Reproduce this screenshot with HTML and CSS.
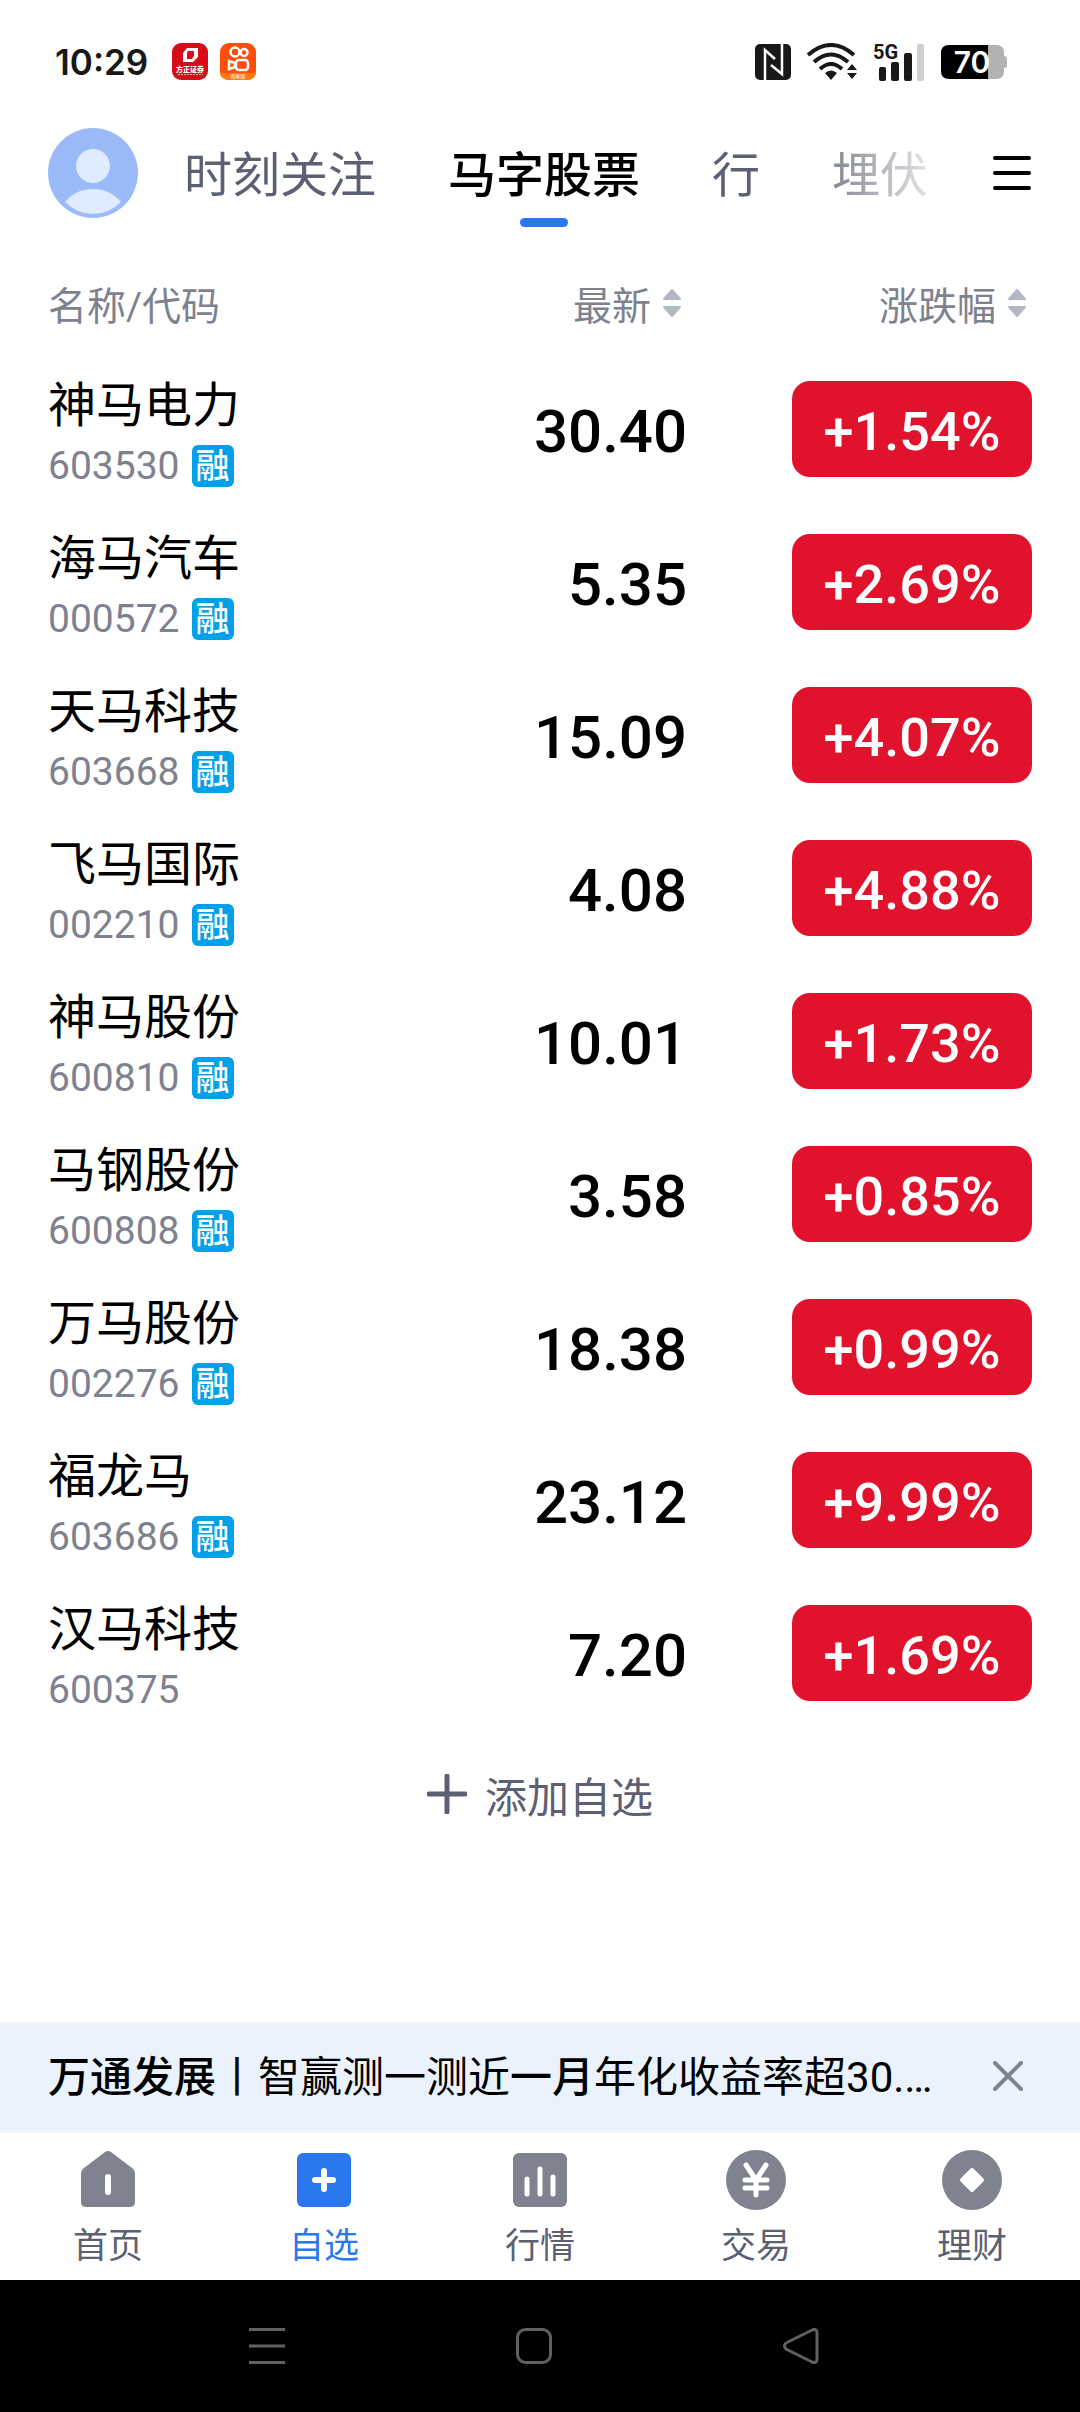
FILE: index.html
```html
<!DOCTYPE html>
<html lang="zh-CN">
<head>
    <meta charset="UTF-8">
    <meta name="viewport" content="width=device-width, initial-scale=1.0">
    <title>自选 - 马字股票</title>
    <link rel="stylesheet" href="styles.css">
</head>
<body>
    <div class="status-bar">
        <time class="clock">10:29</time>
        <div class="status-apps">
            <svg width="36" height="37" viewBox="0 0 36 37" role="img" aria-label="方正证券">
                <rect width="36" height="37" rx="9" fill="#d70b19"/>
                <path d="M15 5h11v9l-5 5H11v-9z" fill="#fff"/>
                <path d="M16 8h6v5l-2 3h-5v-6z" fill="#d70b19"/>
                <text x="18" y="29" text-anchor="middle" class="app-label">方正证券</text>
                <path d="M6 31.500h25" stroke="#fff" stroke-width="1" stroke-dasharray="2 1" opacity=".6"/>
            </svg>
            <svg width="36" height="37" viewBox="0 0 36 37" role="img" aria-label="快手">
                <rect width="36" height="37" rx="9" fill="#ff4d0a"/>
                <path d="M0 30h36a9 7 0 0 1-9 7H9a9 7 0 0 1-9-7z" fill="#fd7a10"/>
                <g fill="none" stroke="#fff" stroke-width="2.500">
                    <circle cx="15" cy="9" r="4.500"/>
                    <circle cx="24" cy="9.500" r="3.500"/>
                    <rect x="16" y="17" width="12" height="10" rx="3"/>
                    <path d="M15 20l-6-2v8l6-2z"/>
                </g>
                <text x="18" y="35" text-anchor="middle" class="app-tag">商家版</text>
            </svg>
        </div>
        <div class="status-icons">
            <svg width="36" height="36" viewBox="0 0 36 36" aria-hidden="true">
                <rect width="36" height="36" rx="5" fill="#181818"/>
                <path d="M10 36V6l10 9M27 0v30l-11-9" fill="none" stroke="#fff" stroke-width="2.500"/>
            </svg>
            <svg width="50" height="37" viewBox="0 0 50 37" aria-hidden="true">
                <g fill="none" stroke="#181818" stroke-width="4">
                    <path d="M1 12Q24-8 47 12"/>
                    <path d="M7 19Q24 4 41 19"/>
                    <path d="M13 26Q24 16 35 26"/>
                </g>
                <path d="M18 30q6-5 12 0l-6 7z" fill="#181818"/>
                <path d="M40 27l5-6 5 6zM40 30h10l-5 6z" fill="#181818"/>
            </svg>
            <svg width="52" height="38" viewBox="0 0 52 38" aria-hidden="true" class="signal">
                <text x="0" y="16" class="signal-label">5G</text>
                <g fill="#181818">
                    <rect x="6" y="24" width="7" height="14" rx="2"/>
                    <rect x="18" y="19" width="8" height="19" rx="2"/>
                    <rect x="31" y="10" width="8" height="28" rx="2"/>
                </g>
                <rect x="44" y="1" width="7" height="37" rx="2" fill="#cfcfcf"/>
            </svg>
            <svg width="66" height="34" viewBox="0 0 66 34" role="img" aria-label="电量 70%">
                <path d="M47 0h8q8 0 8 8v3q3 0 3 3v6q0 3-3 3v3q0 8-8 8h-8z" fill="#b2b2b2"/>
                <path d="M8 0h39v34H8q-8 0-8-8V8q0-8 8-8z" fill="#000"/>
                <text x="31" y="28" text-anchor="middle" class="battery-label">70</text>
            </svg>
        </div>
    </div>

    <header class="top-bar">
        <button class="avatar" aria-label="我的账户">
            <svg width="90" height="90" viewBox="0 0 90 90" aria-hidden="true">
                <circle cx="45" cy="45" r="45" fill="#9abaf9"/>
                <circle cx="45" cy="38" r="17" fill="#dfebfe"/>
                <path d="M17 74Q28 61 45 61T73 74Q61 86 45 86T17 74z" fill="#dfebfe"/>
            </svg>
        </button>
        <div class="tabs">
            <button class="tab">时刻关注</button>
            <button class="tab active">马字股票</button>
            <button class="tab">行</button>
            <button class="tab">埋伏</button>
        </div>
        <button class="menu" aria-label="分组管理">
            <svg width="40" height="34" viewBox="0 0 40 34" aria-hidden="true">
                <path d="M3 2h34M3 17h34M3 32h34" stroke="#000" stroke-width="4" stroke-linecap="round"/>
            </svg>
        </button>
    </header>

    <main>
        <table class="stocks">
            <thead>
                <tr>
                    <th scope="col">名称/代码</th>
                    <th scope="col" class="price">
                        <button class="sort">最新
                            <svg width="18" height="28" viewBox="0 0 18 28" aria-hidden="true"><path d="M9 1l8 9H1zM1 18h16l-8 9z"/></svg>
                        </button>
                    </th>
                    <th scope="col" class="change">
                        <button class="sort">涨跌幅
                            <svg width="18" height="28" viewBox="0 0 18 28" aria-hidden="true"><path d="M9 1l8 9H1zM1 18h16l-8 9z"/></svg>
                        </button>
                    </th>
                </tr>
            </thead>
            <tbody>
                <tr>
                    <td><div class="name">神马电力</div><div class="code">603530 <span class="tag">融</span></div></td>
                    <td class="price">30.40</td>
                    <td class="change"><span class="badge">+1.54%</span></td>
                </tr>
                <tr>
                    <td><div class="name">海马汽车</div><div class="code">000572 <span class="tag">融</span></div></td>
                    <td class="price">5.35</td>
                    <td class="change"><span class="badge">+2.69%</span></td>
                </tr>
                <tr>
                    <td><div class="name">天马科技</div><div class="code">603668 <span class="tag">融</span></div></td>
                    <td class="price">15.09</td>
                    <td class="change"><span class="badge">+4.07%</span></td>
                </tr>
                <tr>
                    <td><div class="name">飞马国际</div><div class="code">002210 <span class="tag">融</span></div></td>
                    <td class="price">4.08</td>
                    <td class="change"><span class="badge">+4.88%</span></td>
                </tr>
                <tr>
                    <td><div class="name">神马股份</div><div class="code">600810 <span class="tag">融</span></div></td>
                    <td class="price">10.01</td>
                    <td class="change"><span class="badge">+1.73%</span></td>
                </tr>
                <tr>
                    <td><div class="name">马钢股份</div><div class="code">600808 <span class="tag">融</span></div></td>
                    <td class="price">3.58</td>
                    <td class="change"><span class="badge">+0.85%</span></td>
                </tr>
                <tr>
                    <td><div class="name">万马股份</div><div class="code">002276 <span class="tag">融</span></div></td>
                    <td class="price">18.38</td>
                    <td class="change"><span class="badge">+0.99%</span></td>
                </tr>
                <tr>
                    <td><div class="name">福龙马</div><div class="code">603686 <span class="tag">融</span></div></td>
                    <td class="price">23.12</td>
                    <td class="change"><span class="badge">+9.99%</span></td>
                </tr>
                <tr>
                    <td><div class="name">汉马科技</div><div class="code">600375</div></td>
                    <td class="price">7.20</td>
                    <td class="change"><span class="badge">+1.69%</span></td>
                </tr>
            </tbody>
        </table>

        <button class="add-stock">
            <svg width="40" height="40" viewBox="0 0 40 40" aria-hidden="true">
                <path d="M20 2v36M2 20h36" stroke="#5b6072" stroke-width="5" stroke-linecap="round"/>
            </svg>
            添加自选
        </button>
    </main>

    <aside class="notice">
        <a class="notice-link" href="#"><b>万通发展</b>丨智赢测一测近<b>一月</b>年化收益率超30.…</a>
        <button class="close" aria-label="关闭">
            <svg width="30" height="30" viewBox="0 0 30 30" aria-hidden="true">
                <path d="M2 2l26 26M28 2L2 28" stroke="#7f828f" stroke-width="4" stroke-linecap="round"/>
            </svg>
        </button>
    </aside>

    <nav class="bottom-nav">
        <a href="#">
            <svg width="60" height="60" viewBox="0 0 60 60" aria-hidden="true">
                <path d="M27 2q3-2 6 0l21 16q3 2 3 5v29q0 5-5 5H8q-5 0-5-5V23q0-3 3-5z" fill="currentColor"/>
                <path d="M30 27v15" stroke="#fff" stroke-width="6" stroke-linecap="round"/>
            </svg>
            <span>首页</span>
        </a>
        <a href="#" class="active" aria-current="page">
            <svg width="60" height="60" viewBox="0 0 60 60" aria-hidden="true">
                <rect x="3" y="3" width="54" height="54" rx="6" fill="currentColor"/>
                <path d="M30 21v18M21 30h18" stroke="#fff" stroke-width="6" stroke-linecap="round"/>
            </svg>
            <span>自选</span>
        </a>
        <a href="#">
            <svg width="60" height="60" viewBox="0 0 60 60" aria-hidden="true">
                <rect x="3" y="3" width="54" height="54" rx="6" fill="currentColor"/>
                <path d="M17 29v15M30 19v25M43 27v17" stroke="#fff" stroke-width="5" stroke-linecap="round"/>
            </svg>
            <span>行情</span>
        </a>
        <a href="#">
            <svg width="60" height="60" viewBox="0 0 60 60" aria-hidden="true">
                <circle cx="30" cy="30" r="30" fill="currentColor"/>
                <path d="M20 15l10 15 10-15M30 30v15M19 30h22M19 38h22" fill="none" stroke="#fff" stroke-width="5" stroke-linecap="round" stroke-linejoin="round"/>
            </svg>
            <span>交易</span>
        </a>
        <a href="#">
            <svg width="60" height="60" viewBox="0 0 60 60" aria-hidden="true">
                <circle cx="30" cy="30" r="30" fill="currentColor"/>
                <path d="M30 20l10 10-10 10-10-10z" fill="#fff" stroke="#fff" stroke-width="4" stroke-linejoin="round"/>
            </svg>
            <span>理财</span>
        </a>
    </nav>

    <div class="system-bar">
        <button aria-label="最近任务">
            <svg width="36" height="36" viewBox="0 0 36 36" aria-hidden="true"><path d="M0 1.500h36M0 18h36M0 34.500h36"/></svg>
        </button>
        <button aria-label="主屏幕">
            <svg width="36" height="36" viewBox="0 0 36 36" aria-hidden="true"><rect x="1.500" y="1.500" width="33" height="33" rx="8"/></svg>
        </button>
        <button aria-label="返回">
            <svg width="36" height="36" viewBox="0 0 36 36" aria-hidden="true"><path d="M3 15L29 2q5-2 5 3v26q0 5-5 3L3 21q-3-3 0-6z"/></svg>
        </button>
    </div>
</body>
</html>
```
FILE: styles.css
```css
* {
    box-sizing: border-box;
}
body {
    margin: 0;
    min-height: 100vh;
    display: flex;
    flex-direction: column;
    background-color: #fff;
    color: #000;
    font-family: Roboto, "Noto Sans CJK SC", sans-serif;
}
button {
    padding: 0;
    border: 0;
    background: none;
    color: inherit;
    font: inherit;
    cursor: pointer;
}
a {
    color: inherit;
    text-decoration: none;
}
svg {
    display: block;
    flex: none;
}

/* Status bar */
.status-bar {
    display: flex;
    align-items: center;
    height: 123px;
    padding: 0 73px 0 55px;
}
.clock {
    font-family: Inter, sans-serif;
    font-size: 35px;
    font-weight: 600;
    color: #181818;
}
.status-apps {
    display: flex;
    gap: 12px;
    margin-left: 24px;
}
.status-icons {
    display: flex;
    align-items: center;
    gap: 16px;
    margin-left: auto;
}
.app-label {
    font-size: 7px;
    font-weight: 900;
    fill: #fff;
}
.app-tag {
    font-size: 5px;
    fill: #fff;
}
.signal {
    overflow: visible;
}
.signal-label {
    font-size: 20px;
    font-weight: 700;
    fill: #181818;
}
.battery-label {
    font-family: Inter, sans-serif;
    font-size: 30px;
    font-weight: 600;
    fill: #fff;
}

/* Group tabs */
.top-bar {
    display: flex;
    align-items: center;
    height: 100px;
    padding: 0 48px;
}
.tabs {
    flex: 1;
    display: flex;
    gap: 72px;
    min-width: 0;
    margin: 0 34px 0 46px;
    overflow: hidden;
    white-space: nowrap;
    -webkit-mask-image: linear-gradient(to right, #000 calc(100% - 168px), transparent);
    mask-image: linear-gradient(to right, #000 calc(100% - 168px), transparent);
}
.tab {
    flex: none;
    position: relative;
    height: 108px;
    padding-bottom: 4px;
    font-size: 48px;
    color: #5b6072;
}
.tab.active {
    font-weight: 500;
    color: #000;
}
.tab.active::after {
    content: "";
    position: absolute;
    left: 50%;
    bottom: 0;
    width: 48px;
    height: 9px;
    margin-left: -24px;
    border-radius: 5px;
    background-color: #2b77f0;
}

/* Stock list */
main {
    flex: 1;
    display: flex;
    flex-direction: column;
}
.stocks {
    width: 100%;
    border-collapse: collapse;
    table-layout: fixed;
}
.stocks th {
    height: 132px;
    padding: 28px 0 0 48px;
    font-size: 39px;
    font-weight: 400;
    text-align: left;
    color: #7e828f;
}
.stocks td {
    height: 153px;
    padding: 8px 0 0 48px;
}
.stocks .price {
    padding-left: 0;
    text-align: right;
}
.stocks .change {
    width: 393px;
    padding-left: 0;
    padding-right: 48px;
    text-align: right;
}
.sort {
    display: inline-flex;
    align-items: center;
    gap: 12px;
    padding-right: 6px;
    vertical-align: middle;
}
.sort svg {
    fill: #b2b8c6;
    stroke: #b2b8c6;
    stroke-width: 2;
    stroke-linejoin: round;
}
.stocks td.price {
    padding-top: 0;
    font-size: 60px;
    font-weight: 500;
}
.stocks td.change {
    padding-top: 0;
    padding-bottom: 6px;
}
.name {
    font-size: 48px;
    line-height: 60px;
}
.code {
    display: flex;
    align-items: center;
    gap: 12px;
    height: 60px;
    font-size: 39px;
    color: #7e828f;
}
.tag {
    width: 42px;
    height: 42px;
    border-radius: 6px;
    background-color: #00a1e9;
    color: #fff;
    font-size: 34px;
    font-weight: 500;
    line-height: 42px;
    text-align: center;
}
.badge {
    display: inline-block;
    width: 240px;
    height: 96px;
    border-radius: 18px;
    background-color: #e1122c;
    color: #fff;
    font-size: 54px;
    font-weight: 500;
    line-height: 102px;
    text-align: center;
    vertical-align: middle;
}
.add-stock {
    display: flex;
    align-items: center;
    align-self: center;
    gap: 18px;
    height: 90px;
    margin-top: 17px;
    font-size: 42px;
    color: #5b6072;
}

/* Promotion strip */
.notice {
    display: flex;
    align-items: center;
    justify-content: space-between;
    height: 111px;
    padding: 0 57px 4px 48px;
    border-top: 3px solid #f2f5fa;
    border-bottom: 3px solid #f2f5fa;
    background-color: #eaf2fe;
}
.notice-link {
    min-width: 0;
    padding-bottom: 4px;
    font-size: 42px;
    white-space: nowrap;
}
.notice b {
    font-weight: 500;
}

/* Bottom navigation */
.bottom-nav {
    display: grid;
    grid-template-columns: repeat(5, 1fr);
    height: 147px;
}
.bottom-nav a {
    display: flex;
    flex-direction: column;
    align-items: center;
    gap: 13px;
    padding-top: 17px;
    color: #7f828f;
    font-size: 35px;
    line-height: 48px;
}
.bottom-nav span {
    color: #5b6072;
}
.bottom-nav .active,
.bottom-nav .active span {
    color: #2b77f0;
}

/* System keys */
.system-bar {
    display: flex;
    align-items: center;
    justify-content: center;
    gap: 231px;
    height: 132px;
    padding-right: 13px;
    background-color: #000;
}
.system-bar svg {
    fill: none;
    stroke: #606060;
    stroke-width: 3;
}
```
